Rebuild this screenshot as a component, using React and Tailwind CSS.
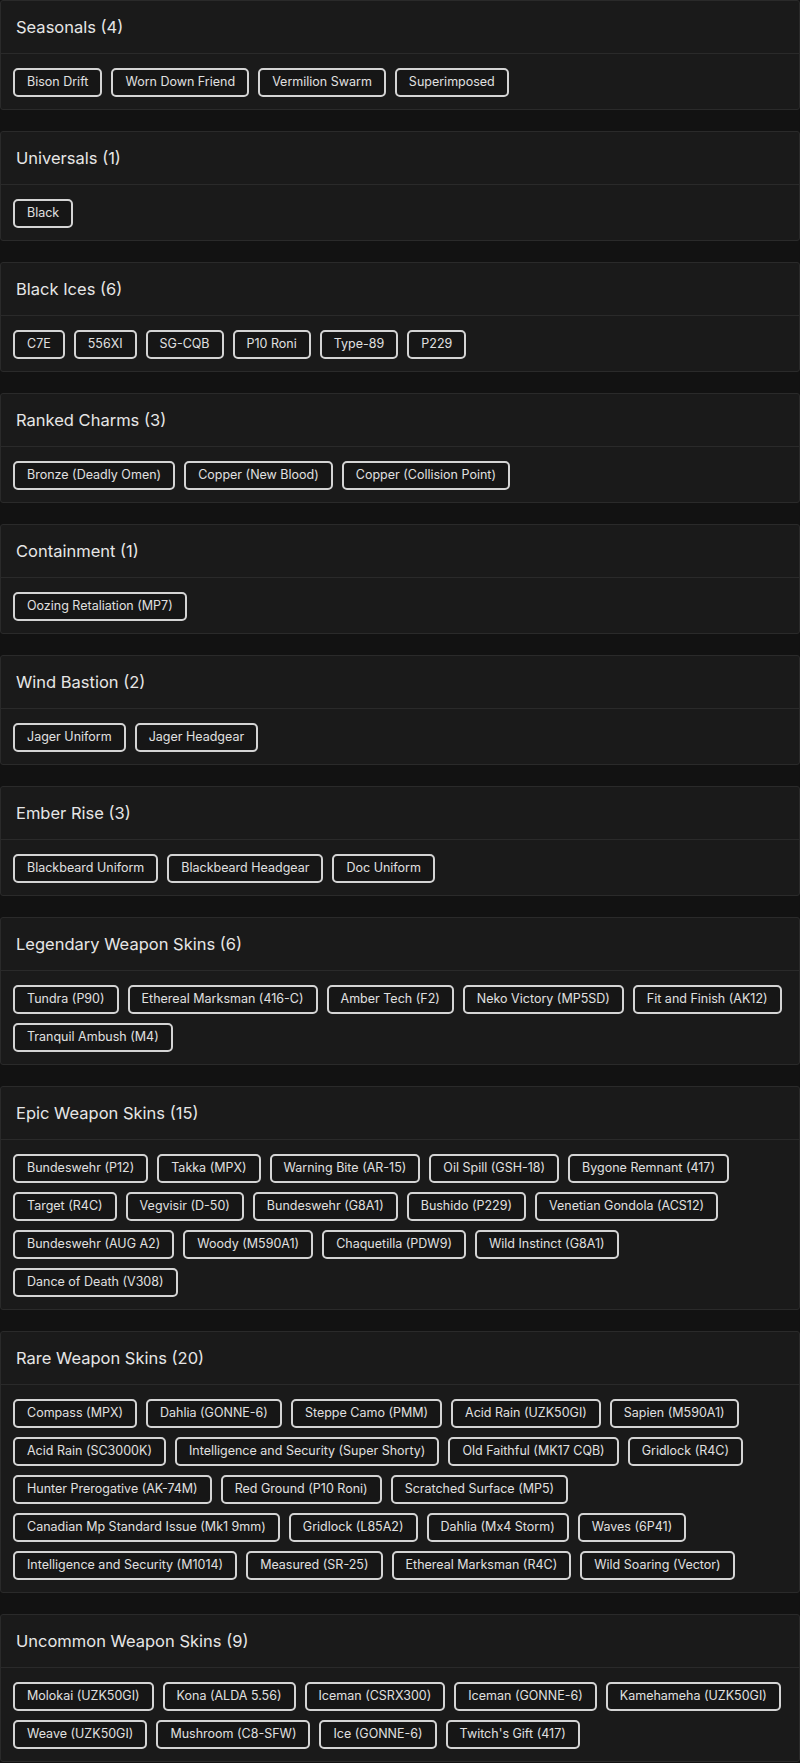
const sections = [
  { title: "Seasonals (4)", items: ["Bison Drift", "Worn Down Friend", "Vermilion Swarm", "Superimposed"] },
  { title: "Universals (1)", items: ["Black"] },
  { title: "Black Ices (6)", items: ["C7E", "556XI", "SG-CQB", "P10 Roni", "Type-89", "P229"] },
  { title: "Ranked Charms (3)", items: ["Bronze (Deadly Omen)", "Copper (New Blood)", "Copper (Collision Point)"] },
  { title: "Containment (1)", items: ["Oozing Retaliation (MP7)"] },
  { title: "Wind Bastion (2)", items: ["Jager Uniform", "Jager Headgear"] },
  { title: "Ember Rise (3)", items: ["Blackbeard Uniform", "Blackbeard Headgear", "Doc Uniform"] },
  {
    title: "Legendary Weapon Skins (6)",
    items: ["Tundra (P90)", "Ethereal Marksman (416-C)", "Amber Tech (F2)", "Neko Victory (MP5SD)", "Fit and Finish (AK12)", "Tranquil Ambush (M4)"],
  },
  {
    title: "Epic Weapon Skins (15)",
    items: [
      "Bundeswehr (P12)", "Takka (MPX)", "Warning Bite (AR-15)", "Oil Spill (GSH-18)", "Bygone Remnant (417)",
      "Target (R4C)", "Vegvisir (D-50)", "Bundeswehr (G8A1)", "Bushido (P229)", "Venetian Gondola (ACS12)",
      "Bundeswehr (AUG A2)", "Woody (M590A1)", "Chaquetilla (PDW9)", "Wild Instinct (G8A1)", "Dance of Death (V308)",
    ],
  },
  {
    title: "Rare Weapon Skins (20)",
    items: [
      "Compass (MPX)", "Dahlia (GONNE-6)", "Steppe Camo (PMM)", "Acid Rain (UZK50GI)", "Sapien (M590A1)",
      "Acid Rain (SC3000K)", "Intelligence and Security (Super Shorty)", "Old Faithful (MK17 CQB)", "Gridlock (R4C)",
      "Hunter Prerogative (AK-74M)", "Red Ground (P10 Roni)", "Scratched Surface (MP5)",
      "Canadian Mp Standard Issue (Mk1 9mm)", "Gridlock (L85A2)", "Dahlia (Mx4 Storm)", "Waves (6P41)",
      "Intelligence and Security (M1014)", "Measured (SR-25)", "Ethereal Marksman (R4C)", "Wild Soaring (Vector)",
    ],
  },
  {
    title: "Uncommon Weapon Skins (9)",
    items: [
      "Molokai (UZK50GI)", "Kona (ALDA 5.56)", "Iceman (CSRX300)", "Iceman (GONNE-6)", "Kamehameha (UZK50GI)",
      "Weave (UZK50GI)", "Mushroom (C8-SFW)", "Ice (GONNE-6)", "Twitch's Gift (417)",
    ],
  },
];

export default function App() {
  return (
    <div className="min-h-[1763px] bg-[#121212] flex flex-col gap-[21px] font-['Inter','Liberation_Sans',sans-serif]">
      {sections.map((s) => (
        <div key={s.title} className="bg-[#1a1a1a] border border-[#2a2a2a] rounded-[3px]">
          <div className="h-[53px] flex items-center px-[15px] border-b border-[#2a2a2a]">
            <h2 className="text-[16.5px] text-[#e6e6e6] font-normal">{s.title}</h2>
          </div>
          <div className="flex flex-wrap gap-[9px] px-3 pt-[14px] pb-[12px]">
            {s.items.map((it) => (
              <span
                key={it}
                className="h-[29px] flex items-center px-3 border-2 border-[#d4d4d4] rounded-[5px] bg-[#161616] text-[12.5px] text-[#e0e0e0]"
              >
                {it}
              </span>
            ))}
          </div>
        </div>
      ))}
    </div>
  );
}
